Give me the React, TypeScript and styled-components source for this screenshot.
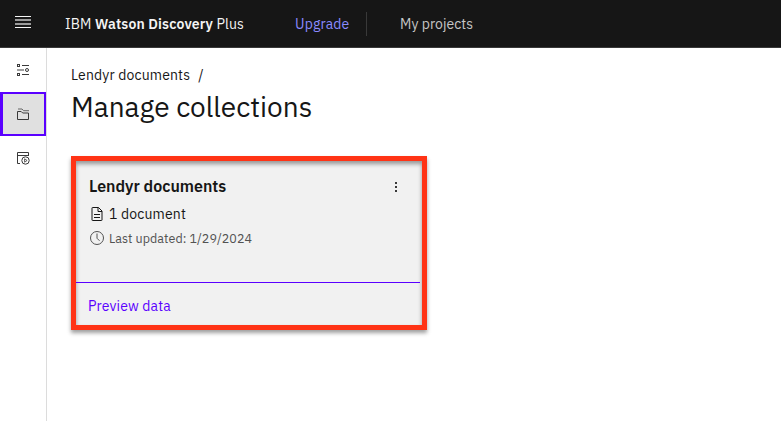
import React from "react";
import styled, { createGlobalStyle } from "styled-components";

const Global = createGlobalStyle`
  * { box-sizing: border-box; }
  body {
    margin: 0;
    background: #fff;
    color: #161616;
    font-family: "IBM Plex Sans", "Open Sans", sans-serif;
    font-size: 14px;
    overflow: hidden;
  }
`;

const Page = styled.div`
  display: flex;
  flex-direction: column;
  height: 421px;
`;

const Header = styled.header`
  display: flex;
  align-items: center;
  height: 48px;
  flex: none;
  background: #161616;
  border-bottom: 1px solid #393939;
  color: #f4f4f4;
  white-space: nowrap;
`;

const MenuButton = styled.div`
  width: 65px;
  padding: 0 0 3px 15px;
  svg { display: block; }
`;

const Brand = styled.div`
  width: 230px;
  letter-spacing: 0.14px;
  strong { font-weight: 600; }
`;

const Upgrade = styled.a`
  width: 72px;
  height: 24px;
  line-height: 24px;
  letter-spacing: 0.14px;
  color: #8a8aff;
  border-right: 1px solid #393939;
`;

const NavLink = styled.a`
  padding-left: 33px;
  letter-spacing: 0.05px;
  color: #c6c6c6;
`;

const Body = styled.div`
  display: flex;
  flex: 1;
`;

const Rail = styled.nav`
  width: 47px;
  border-right: 1px solid #dcdcdc;
`;

const RailItem = styled.div<{ $active?: boolean }>`
  display: flex;
  align-items: center;
  justify-content: center;
  width: 46px;
  height: 44px;
  background: ${(p) => (p.$active ? "#e0e0e0" : "#fff")};
  border: 2px solid ${(p) => (p.$active ? "#5a00ff" : "transparent")};
  border-left-width: 3px;
  svg { display: block; margin-right: 1px; }
`;

const Main = styled.main`
  padding: 17px 0 0 24px;
`;

const Breadcrumb = styled.div`
  display: flex;
  gap: 8px;
  line-height: 20px;
  letter-spacing: 0.16px;
`;

const Title = styled.h1`
  margin: 4px 0 0;
  font-size: 28px;
  font-weight: 400;
  line-height: 36px;
`;

const Card = styled.section`
  display: flex;
  flex-direction: column;
  width: 356px;
  height: 174px;
  margin-top: 31px;
  border: 5px solid #ff3315;
  background: #f1f1f1;
  box-shadow: 0 3px 4px rgba(0, 0, 0, 0.38), inset 0 3px 4px rgba(0, 0, 0, 0.38);
`;

const CardBody = styled.div`
  display: flex;
  flex: none;
  justify-content: space-between;
  width: 344px;
  height: 122px;
  padding: 14px 18px 0 13px;
  border-bottom: 1px solid #5a00ff;
`;

const CardTitle = styled.h2`
  margin: 0;
  font-size: 16px;
  font-weight: 600;
  line-height: 22px;
`;

const Meta = styled.div<{ $small?: boolean }>`
  display: flex;
  align-items: center;
  gap: 4px;
  height: 24px;
  margin-top: ${(p) => (p.$small ? "0" : "5px")};
  font-size: ${(p) => (p.$small ? "12.5px" : "14px")};
  letter-spacing: ${(p) => (p.$small ? "0.06px" : "0.16px")};
  color: ${(p) => (p.$small ? "#525252" : "#161616")};
  svg { display: block; }
`;

const Overflow = styled.div`
  padding-top: 5px;
`;

const Preview = styled.a`
  padding-left: 12px;
  line-height: 46px;
  letter-spacing: 0.16px;
  color: #5a00ff;
`;

const Icon = ({ children }: { children: React.ReactNode }) => (
  <svg width="16" height="16" viewBox="0 0 32 32" fill="none" stroke="currentColor" strokeWidth="2">
    {children}
  </svg>
);

export default function App() {
  return (
    <Page>
      <Global />
      <Header>
        <MenuButton>
          <svg width="16" height="12" viewBox="0 0 16 12" fill="#f4f4f4">
            <path d="M0 0h16v1H0zM0 11h16v1H0z" />
            <path d="M0 3h16v2H0zM0 7h16v2H0z" opacity=".6" />
          </svg>
        </MenuButton>
        <Brand>IBM <strong>Watson Discovery</strong> Plus</Brand>
        <Upgrade>Upgrade</Upgrade>
        <NavLink>My projects</NavLink>
      </Header>
      <Body>
        <Rail>
          <RailItem>
            <svg width="14" height="14" viewBox="0 0 14 14" fill="none" stroke="#393939">
              <rect x="1.5" y="1.5" width="2" height="2" />
              <path d="M6 2.5h7M6 11.5h7" />
              <path d="M1 7h7" stroke="#a0a0a0" strokeWidth="2" />
              <circle cx="11" cy="7" r="1.5" />
              <rect x="1.5" y="10.5" width="2" height="2" />
            </svg>
          </RailItem>
          <RailItem $active>
            <svg width="14" height="14" viewBox="0 0 14 14" fill="none" stroke="#393939">
              <path d="M1.5 4.5h3.7l1.5 1.5h5.8v6.5h-11z" strokeLinejoin="round" />
              <path d="M2 2h4l1.5 1.7h5.5" stroke="#666" />
            </svg>
          </RailItem>
          <RailItem>
            <svg width="14" height="14" viewBox="0 0 14 14" fill="none" stroke="#393939">
              <path d="M4 12.5H1.5v-11h11V5M1.5 4.5h11" strokeLinejoin="round" />
              <circle cx="9.5" cy="9.5" r="3.7" />
              <path d="M8.6 7.8v3.4l2.5-1.7z" strokeWidth=".8" />
            </svg>
          </RailItem>
        </Rail>
        <Main>
          <Breadcrumb><span>Lendyr documents</span><span>/</span></Breadcrumb>
          <Title>Manage collections</Title>
          <Card>
            <CardBody>
              <div>
                <CardTitle>Lendyr documents</CardTitle>
                <Meta>
                  <Icon>
                    <path d="M19 3H7a1 1 0 0 0-1 1v24a1 1 0 0 0 1 1h18a1 1 0 0 0 1-1V10zM18 3v8h8M10 17h12M10 23h12" />
                  </Icon>
                  1 document
                </Meta>
                <Meta $small>
                  <Icon>
                    <circle cx="16" cy="16" r="13" />
                    <path d="M16 7v9.5l5 5" />
                  </Icon>
                  Last updated: 1/29/2024
                </Meta>
              </div>
              <Overflow>
                <svg width="12" height="16" viewBox="0 0 12 16" fill="#393939">
                  <path d="M5 2h2v2H5zM5 6h2v2H5zM5 10h2v2H5z" />
                </svg>
              </Overflow>
            </CardBody>
            <Preview>Preview data</Preview>
          </Card>
        </Main>
      </Body>
    </Page>
  );
}
